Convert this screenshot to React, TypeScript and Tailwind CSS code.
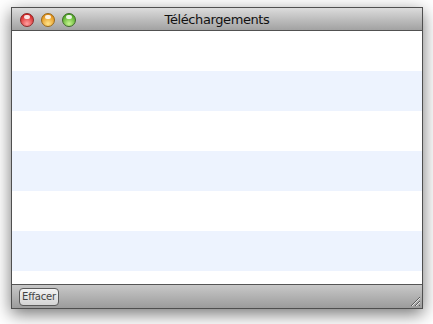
import React from "react";

const rows = [0, 1, 2, 3, 4, 5, 6];

function Light({ from, to, ring }: { from: string; to: string; ring: string }) {
  return (
    <div
      className="relative w-[14px] h-[14px] rounded-full border"
      style={{ borderColor: ring, background: `radial-gradient(circle at 50% 80%, ${to} 0%, ${from} 80%)` }}
    >
      <div className="absolute left-[3px] top-[1px] w-[6px] h-[4px] rounded-full bg-white/85" />
    </div>
  );
}

export default function App() {
  return (
    <div className="w-[433px] h-[324px] bg-white pl-[11px] pt-[7px] font-['DejaVu_Sans',sans-serif]">
      <div className="w-[412px] h-[302px] flex flex-col border border-[#4f4f4f] shadow-[0_5px_16px_rgba(0,0,0,0.55)]">
        <div className="relative h-[23px] shrink-0 flex items-center border-b border-[#515151] bg-gradient-to-b from-[#dcdcdc] to-[#a2a2a2]">
          <div className="flex items-center gap-[7px] pl-[8px] pt-[1px]">
            <Light from="#d42020" to="#ffa0a0" ring="#8a2a2a" />
            <Light from="#e08c12" to="#ffe48a" ring="#9a6a1a" />
            <Light from="#4aa51f" to="#c8f590" ring="#3f6a2a" />
          </div>
          <div className="absolute inset-0 flex items-center justify-center text-[13px] text-[#111] pt-[2px] tracking-[-0.4px]">
            Téléchargements
          </div>
        </div>
        <div className="flex-1 overflow-hidden bg-white">
          {rows.map((r) => (
            <div key={r} className={r % 2 === 1 ? "h-[40px] bg-[#edf3fe]" : "h-[40px] bg-white"} />
          ))}
        </div>
        <div className="relative h-[24px] shrink-0 flex items-center border-t border-[#555] bg-gradient-to-b from-[#c8c8c8] to-[#9c9c9c] pl-[7px]">
          <button className="h-[18px] w-[40px] rounded-[4px] border border-[#5a5a5a] bg-gradient-to-b from-[#f4f4f4] to-[#d4d4d4] text-[10px] leading-none text-[#444] tracking-[-0.2px]">
            Effacer
          </button>
          <svg className="absolute right-[1px] bottom-[1px]" width="12" height="12" viewBox="0 0 12 12">
            <path d="M11 2 L2 11 M11 6 L6 11 M11 10 L10 11" stroke="#5a5a5a" strokeWidth="1" />
            <path d="M11 3 L3 11 M11 7 L7 11" stroke="#e6e6e6" strokeWidth="1" />
          </svg>
        </div>
      </div>
    </div>
  );
}
